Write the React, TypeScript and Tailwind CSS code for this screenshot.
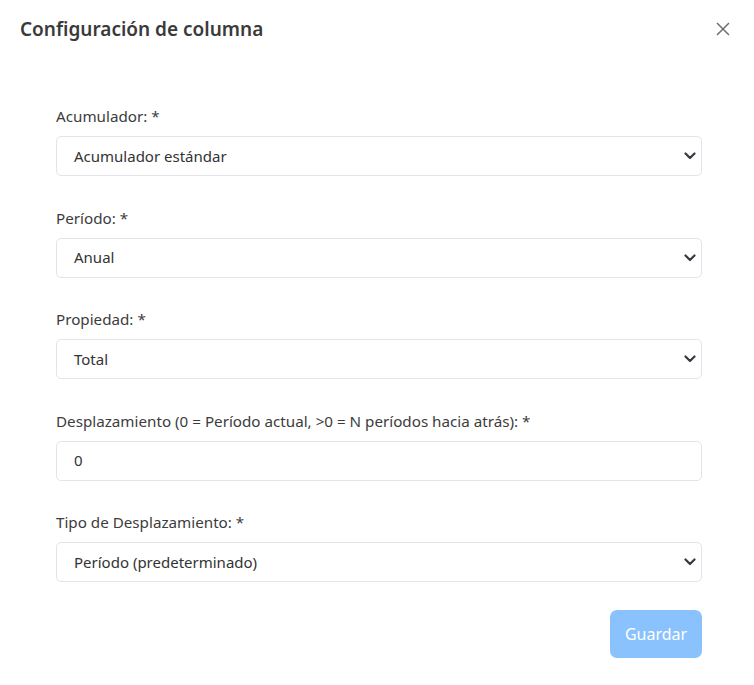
import React from "react";

type FieldProps = {
  label: string;
  value: string;
  isSelect?: boolean;
};

function Chevron() {
  return (
    <svg width="12" height="8" viewBox="0 0 12 8" fill="none">
      <path d="M1.5 1.5 6 6 10.5 1.5" stroke="#343a40" strokeWidth="2.2" strokeLinecap="round" strokeLinejoin="round" />
    </svg>
  );
}

function Field({ label, value, isSelect = true }: FieldProps) {
  return (
    <div className="flex flex-col shrink-0">
      <label className="text-[15.2px] leading-[20px] text-[#3c3c3c] mb-[10px]">{label}</label>
      <div className="h-[40px] border border-[#e3e3ec] rounded-[5px] flex items-center justify-between pl-[17px] pr-[5px] bg-white">
        <span className="text-[15px] text-[#333]">{value}</span>
        {isSelect && <Chevron />}
      </div>
    </div>
  );
}

export default function App() {
  return (
    <div className="w-[754px] h-[685px] bg-white font-['Noto_Sans',sans-serif] flex flex-col">
      <div className="flex items-center justify-between pl-[20px] pr-[24px] h-[58px] shrink-0">
        <h2 className="text-[19px] font-semibold text-[#3a3a3a]">Configuración de columna</h2>
        <svg width="14" height="14" viewBox="0 0 14 14" fill="none">
          <path d="M1 1 13 13M13 1 1 13" stroke="#6b6f76" strokeWidth="1.5" />
        </svg>
      </div>
      <div className="flex flex-col gap-[31.5px] pl-[56px] pr-[52px] pt-[48px] shrink-0">
        <Field label="Acumulador: *" value="Acumulador estándar" />
        <Field label="Período: *" value="Anual" />
        <Field label="Propiedad: *" value="Total" />
        <Field label="Desplazamiento (0 = Período actual, >0 = N períodos hacia atrás): *" value="0" isSelect={false} />
        <Field label="Tipo de Desplazamiento: *" value="Período (predeterminado)" />
      </div>
      <div className="flex justify-end px-[52px] pt-[28px] shrink-0">
        <button className="w-[92px] h-[48px] rounded-[7px] bg-[#8ac2fe] text-white text-[16px]">Guardar</button>
      </div>
    </div>
  );
}
